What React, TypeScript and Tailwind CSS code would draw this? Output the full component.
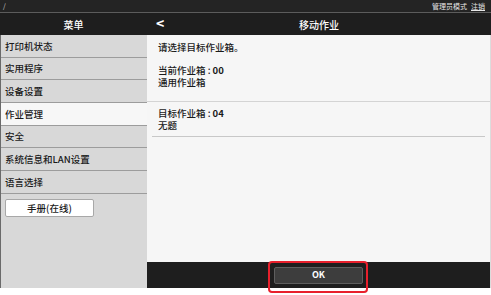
const menu = [
  "打印机状态",
  "实用程序",
  "设备设置",
  "作业管理",
  "安全",
  "系统信息和LAN设置",
  "语言选择",
];

export default function App() {
  return (
    <div
      className="w-[491px] h-[295px] bg-white flex flex-col overflow-hidden"
      style={{ fontFamily: '"Noto Sans CJK SC", "Liberation Sans", sans-serif' }}
    >
      {/* top strip */}
      <div className="h-[13px] bg-[#242424] border-b border-[#5c5c5c] flex items-center justify-between px-[3px] text-white">
        <span className="text-[7px] leading-none text-[#ccc]">/</span>
        <div className="flex gap-[4px] text-[7px] leading-none text-[#e6e6e6] pr-[3px]">
          <span>管理员模式</span>
          <span className="underline">注销</span>
        </div>
      </div>

      {/* header */}
      <div className="h-[22px] bg-[#1e1e1e] flex text-white">
        <div className="w-[147px] flex items-center justify-center text-[10px] font-medium">菜单</div>
        <div className="flex-1 relative flex items-center justify-center text-[10px] font-medium">
          <span className="absolute left-[9px] top-[3px] text-[14px] leading-none font-bold">&lt;</span>
          <span>移动作业</span>
        </div>
      </div>

      <div className="flex h-[253px]">
        {/* sidebar */}
        <div className="w-[147px] bg-[#d8d8d8] border-l border-[#6a6a6a] flex flex-col">
          {menu.map((m) => (
            <div
              key={m}
              className={`h-[22.7px] border-b border-[#9c9c9c] flex items-center pl-[4px] text-[9.5px] font-medium text-[#1a1a1a] ${
                m === "作业管理" ? "bg-[#f7f7f7]" : ""
              }`}
            >
              {m}
            </div>
          ))}
          <div className="px-[4px] pt-[5px]">
            <div className="w-[89px] h-[18px] bg-white border border-[#a8a8a8] rounded-[2px] flex items-center justify-center text-[9.5px] font-medium text-[#1a1a1a]">
              手册(在线)
            </div>
          </div>
        </div>

        {/* content */}
        <div className="flex-1 flex flex-col bg-[#f6f6f6] border-r border-[#dcdcdc]">
          <div className="flex-1 text-[9.5px] leading-[12px] font-medium text-[#1a1a1a]">
            <div className="h-[67px] border-b border-[#d4d4d4] pl-[11px] pt-[6px]">
              <div>请选择目标作业箱。</div>
              <div className="mt-[11px]">当前作业箱 : <b>00</b></div>
              <div>通用作业箱</div>
            </div>
            <div className="mx-[5px] h-[35px] border-b border-[#c8c8c8] pl-[6px] pt-[5px]">
              <div>目标作业箱 : <b>04</b></div>
              <div>无题</div>
            </div>
          </div>
          <div className="h-[26px] bg-[#1e1e1e] flex items-center justify-center">
            <div className="relative">
              <div className="w-[89px] h-[17px] bg-[#3d3d3d] border border-[#5e5e5e] rounded-[2px] flex items-center justify-center text-white text-[9px] font-bold">
                OK
              </div>
              <div className="absolute -left-[6px] -right-[5px] -top-[6px] -bottom-[9px] border-2 border-[#e8202c] rounded-[4px]" />
            </div>
          </div>
        </div>
      </div>
    </div>
  );
}
